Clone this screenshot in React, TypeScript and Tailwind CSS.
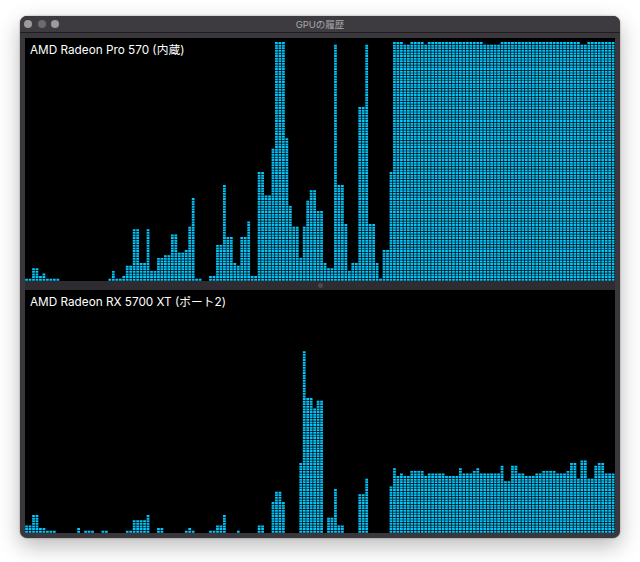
const COL_W = 590 / 170
const ROW_H = 2.6
const PANEL_H = 243

// [number of columns, height in rows], left to right
const TOP_RUNS: [number, number][] = [
  [2, 1], [2, 5], [1, 2], [1, 3], [4, 1], [14, 0], [1, 1], [1, 4], [2, 1], [1, 2], [2, 6], [2, 20], [2, 7], [1, 20],
  [2, 4], [2, 9], [2, 10], [2, 18], [2, 11], [1, 12], [1, 21], [1, 32], [2, 1], [2, 0], [2, 2], [2, 14], [1, 37],
  [2, 17], [1, 7], [1, 6], [2, 17], [1, 23], [2, 2], [2, 42], [2, 33], [1, 51], [3, 92], [1, 55], [1, 29], [2, 21],
  [1, 9], [1, 21], [1, 31], [2, 35], [2, 27], [1, 7], [2, 5], [1, 91], [2, 37], [1, 22], [1, 4], [2, 7], [2, 67],
  [1, 91], [2, 22], [1, 7], [1, 1], [2, 12], [1, 42], [3, 92], [2, 91], [4, 92], [1, 91], [16, 92], [5, 91], [23, 92],
  [2, 91], [8, 92],
]

const BOTTOM_RUNS: [number, number][] = [
  [2, 3], [2, 7], [2, 2], [3, 1], [6, 0], [1, 2], [1, 0], [3, 1], [2, 0], [2, 1], [5, 0], [2, 1], [4, 5], [1, 7], [2, 0],
  [2, 2], [6, 0], [1, 1], [1, 2], [1, 1], [4, 0], [2, 1], [2, 3], [1, 7], [3, 0], [1, 1], [5, 0], [2, 3], [2, 0],
  [1, 12], [2, 16], [1, 12], [4, 0], [1, 27], [1, 70], [2, 52], [1, 48], [2, 51], [1, 0], [2, 6], [1, 17], [2, 3],
  [4, 0], [2, 15], [1, 21], [6, 0], [1, 18], [1, 25], [1, 22], [1, 23], [2, 22], [4, 24], [1, 22], [5, 23], [4, 22],
  [1, 25], [3, 23], [1, 24], [1, 25], [6, 23], [1, 26], [2, 20], [2, 26], [2, 23], [3, 22], [2, 23], [4, 24], [3, 23],
  [1, 24], [2, 27], [1, 21], [2, 28], [2, 21], [1, 26], [2, 27], [3, 23],
]

// one path holding every lit cell, so edges antialias cell by cell
function cellPath(runs: [number, number][]) {
  let col = 0
  let d = ''
  for (const [count, rows] of runs) {
    for (let c = 0; c < count; c++, col++) {
      const x = (col * COL_W + 0.2).toFixed(2)
      for (let r = 0; r < rows; r++) {
        const y = (PANEL_H - (r + 1) * ROW_H + 0.3).toFixed(2)
        d += `M${x} ${y}h2.75v1.95h-2.75z`
      }
    }
  }
  return d
}

function HistoryPanel({ label, runs }: { label: string; runs: [number, number][] }) {
  return (
    <div className="relative h-[243px] bg-black">
      <svg width={590} height={PANEL_H} className="block">
        <path d={cellPath(runs)} fill="#00c8ff" />
      </svg>
      <span className="absolute left-[5px] top-[4px] font-['Inter','Noto_Sans_CJK_JP',sans-serif] text-[11.75px] leading-[16px] text-white">
        {label}
      </span>
    </div>
  )
}

export default function App() {
  return (
    <div className="h-[562px] w-[640px] bg-white pl-[20px] pt-[16px]">
      <div className="h-[522px] w-[600px] overflow-hidden rounded-[7px] bg-[#39373b] shadow-[0_8px_22px_rgba(0,0,0,0.28),0_0_2px_rgba(0,0,0,0.4)]">
        {/* Title bar */}
        <div className="relative flex h-[17px] items-center gap-[5.5px] border-b border-[#1f1d20] bg-[#3d3b3f] pl-[4px]">
          <span className="h-[8px] w-[8px] rounded-full bg-[#9b9a9d]" />
          <span className="h-[8px] w-[8px] rounded-full bg-[#6b6a6d]" />
          <span className="h-[8px] w-[8px] rounded-full bg-[#9b9a9d]" />
          <span className="absolute inset-x-0 top-0 text-center font-['Inter','Noto_Sans_CJK_JP',sans-serif] text-[9.5px] leading-[17px] text-[#a9a8aa]">
            GPUの履歴
          </span>
        </div>
        <div className="px-[5px] pt-[5px]">
          <HistoryPanel label="AMD Radeon Pro 570 (内蔵)" runs={TOP_RUNS} />
          {/* Split view divider */}
          <div className="flex h-[9px] items-center justify-center bg-[#2e2c30]">
            <span className="h-[5px] w-[5px] rounded-full bg-[#4a484c]" />
          </div>
          <HistoryPanel label="AMD Radeon RX 5700 XT (ポート2)" runs={BOTTOM_RUNS} />
        </div>
      </div>
    </div>
  )
}
